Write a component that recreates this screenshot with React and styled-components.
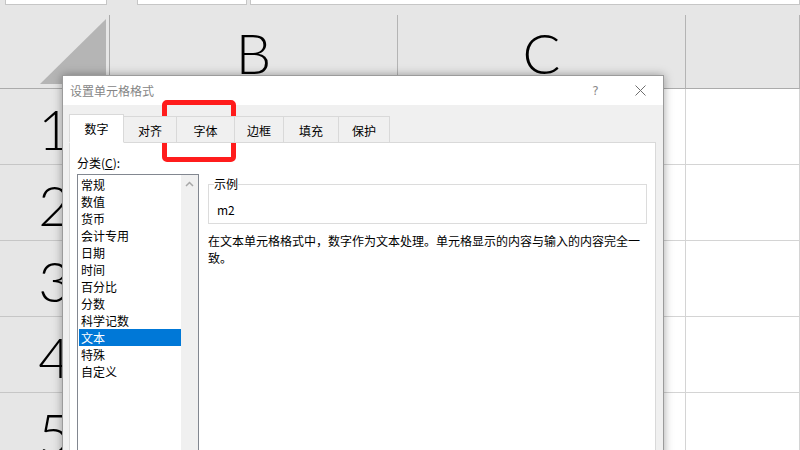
import React from 'react';
import styled, { createGlobalStyle } from 'styled-components';

const UI_FONT = `"Noto Sans CJK SC", "Noto Sans", sans-serif`;
const SHEET_FONT = `Lato, "Open Sans", sans-serif`;

const GlobalStyle = createGlobalStyle`
  *, *::before, *::after { box-sizing: border-box; }
  html, body { margin: 0; padding: 0; }
  body { width: 800px; height: 450px; overflow: hidden; background: #fff; }
`;

const Sheet = styled.div`
  position: relative;
  width: 800px;
  height: 450px;
  overflow: hidden;
  background: #e6e6e6;
`;

const TopStrip = styled.div`
  display: flex;
  height: 15px;
`;

const StripBox = styled.div`
  margin-left: ${(p) => p.$gap}px;
  width: ${(p) => (p.$width ? `${p.$width}px` : 'auto')};
  flex: ${(p) => (p.$width ? 'none' : 1)};
  height: 5px;
  background: #fff;
  border: 1px solid #c6c6c6;
  border-top: none;
`;

const Grid = styled.div`
  display: grid;
  grid-template-columns: 110px 288px 288px 1fr;
  grid-template-rows: 74px repeat(5, 76px);
`;

const Corner = styled.div`
  border-right: 1px solid #ababab;
  border-bottom: 1px solid #ababab;
`;

const ColHeader = styled.div`
  display: flex;
  align-items: center;
  justify-content: center;
  padding-top: 3px;
  border-right: 1px solid #b4b4b4;
  border-bottom: 1px solid #ababab;
  font-family: ${SHEET_FONT};
  font-size: 56px;
  font-weight: 300;
  line-height: 1;
  color: #000;
`;

const RowHeader = styled.div`
  display: flex;
  align-items: center;
  justify-content: center;
  padding-top: 5px;
  border-right: 1px solid #ababab;
  border-bottom: 1px solid #c6c6c6;
  font-family: ${SHEET_FONT};
  font-size: 56px;
  font-weight: 300;
  line-height: 1;
  color: #000;
`;

const Cell = styled.div`
  background: #fff;
  border-right: 1px solid #d4d4d4;
  border-bottom: 1px solid #d4d4d4;
`;

const Dialog = styled.div`
  position: absolute;
  left: 62px;
  top: 75px;
  width: 602px;
  height: 420px;
  display: flex;
  flex-direction: column;
  border: 1px solid #9b9b9b;
  background: #f0f0f0;
  box-shadow: 0 0 9px rgba(0, 0, 0, 0.35);
  font-family: ${UI_FONT};
  font-size: 12px;
  color: #000;
`;

const TitleBar = styled.div`
  display: flex;
  align-items: center;
  height: 29px;
  padding-left: 7px;
  background: #fff;
`;

const Title = styled.div`
  flex: 1;
  color: #858585;
  font-size: 12px;
`;

const TitleButton = styled.div`
  width: 45px;
  height: 29px;
  display: flex;
  align-items: center;
  justify-content: center;
  color: #8a8a8a;
  font-family: "DejaVu Sans", sans-serif;
  font-size: 12px;
`;

const Body = styled.div`
  flex: 1;
  display: flex;
  flex-direction: column;
  padding: 9px 7px 0 6px;
`;

const TabRow = styled.div`
  position: relative;
  z-index: 1;
  display: flex;
  align-items: flex-end;
  height: 29px;
  margin-bottom: -1px;
`;

const Tab = styled.div`
  width: ${(p) => p.$width}px;
  height: ${(p) => (p.$active ? 29 : 27)}px;
  margin-left: ${(p) => (p.$first ? 0 : -1)}px;
  display: flex;
  align-items: center;
  justify-content: center;
  padding-top: ${(p) => (p.$active ? 0 : 1)}px;
  background: ${(p) => (p.$active ? '#fff' : '#f0f0f0')};
  border: 1px solid #d9d9d9;
  border-bottom-color: ${(p) => (p.$active ? '#fff' : '#d9d9d9')};
  position: relative;
  z-index: ${(p) => (p.$active ? 2 : 1)};
`;

const Panel = styled.div`
  flex: 1;
  display: flex;
  gap: 9px;
  padding: 13px 0 0 7px;
  background: #fff;
  border: 1px solid #d9d9d9;
`;

const LeftColumn = styled.div`
  width: 122px;
  display: flex;
  flex-direction: column;
  gap: 4px;
`;

const Label = styled.div`
  line-height: 14px;
  u { text-decoration: underline; text-underline-offset: 1px; }
`;

const ListBox = styled.div`
  display: flex;
  height: 300px;
  border: 1px solid #828790;
`;

const Items = styled.div`
  flex: 1;
  padding: 1px 0 0 1px;
`;

const Item = styled.div`
  height: 17px;
  line-height: 17px;
  padding-left: 2px;
  background: ${(p) => (p.$selected ? '#0078d7' : 'transparent')};
  color: ${(p) => (p.$selected ? '#fff' : '#000')};
`;

const ScrollTrack = styled.div`
  width: 17px;
  background: #f0f0f0;
  display: flex;
  justify-content: center;
  padding-top: 6px;
`;

const RightColumn = styled.div`
  width: 439px;
  padding-top: 21px;
`;

const Group = styled.fieldset`
  margin: 0;
  min-width: 0;
  padding: 0 0 6px 5px;
  border: 1px solid #dcdcdc;
`;

const Legend = styled.legend`
  padding: 0;
  line-height: 14px;
`;

const Sample = styled.div`
  margin-top: 12px;
  padding-left: 3px;
  line-height: 14px;
`;

const Description = styled.div`
  margin-top: 8px;
  line-height: 17px;
`;

const Highlight = styled.div`
  position: absolute;
  left: 162px;
  top: 100px;
  width: 74px;
  height: 62px;
  border: 5px solid #ff1c1c;
  border-radius: 5px;
`;

const categories = [
  '常规', '数值', '货币', '会计专用', '日期', '时间',
  '百分比', '分数', '科学记数', '文本', '特殊', '自定义',
];

const tabs = [
  { label: '数字', width: 55 },
  { label: '对齐', width: 54 },
  { label: '字体', width: 59 },
  { label: '边框', width: 50 },
  { label: '填充', width: 56 },
  { label: '保护', width: 52 },
];

const rows = ['1', '2', '3', '4', '5'];

const App = () => {
  return (
    <Sheet>
      <GlobalStyle />
      <TopStrip>
        <StripBox $gap={5} $width={102} />
        <StripBox $gap={30} $width={110} />
        <StripBox $gap={3} />
      </TopStrip>

      <Grid>
        <Corner>
          <svg width="110" height="74" viewBox="0 0 110 74">
            <polygon points="106,4 106,69 40,69" fill="#b5b5b5" />
          </svg>
        </Corner>
        <ColHeader>B</ColHeader>
        <ColHeader>C</ColHeader>
        <ColHeader />
        {rows.map((n) => (
          <React.Fragment key={n}>
            <RowHeader>{n}</RowHeader>
            <Cell />
            <Cell />
            <Cell />
          </React.Fragment>
        ))}
      </Grid>

      {/* Format Cells dialog */}
      <Dialog>
        <TitleBar>
          <Title>设置单元格格式</Title>
          <TitleButton>?</TitleButton>
          <TitleButton>
            <svg width="11" height="11" viewBox="0 0 11 11">
              <path d="M0.5 0.5 L10.5 10.5 M10.5 0.5 L0.5 10.5" stroke="#6e6e6e" strokeWidth="1" />
            </svg>
          </TitleButton>
        </TitleBar>

        <Body>
          <TabRow>
            {tabs.map((t, i) => (
              <Tab key={t.label} $width={t.width} $first={i === 0} $active={i === 0}>
                {t.label}
              </Tab>
            ))}
          </TabRow>

          <Panel>
            <LeftColumn>
              <Label>
                分类(<u>C</u>):
              </Label>
              <ListBox>
                <Items>
                  {categories.map((c) => (
                    <Item key={c} $selected={c === '文本'}>
                      {c}
                    </Item>
                  ))}
                </Items>
                <ScrollTrack>
                  <svg width="9" height="6" viewBox="0 0 9 6">
                    <path d="M1 5 L4.5 1.5 L8 5" fill="none" stroke="#a8a8a8" strokeWidth="1.5" />
                  </svg>
                </ScrollTrack>
              </ListBox>
            </LeftColumn>

            <RightColumn>
              <Group>
                <Legend>示例</Legend>
                <Sample>m2</Sample>
              </Group>
              <Description>
                在文本单元格格式中，数字作为文本处理。单元格显示的内容与输入的内容完全一致。
              </Description>
            </RightColumn>
          </Panel>
        </Body>
      </Dialog>

      <Highlight />
    </Sheet>
  );
};

export default App;
